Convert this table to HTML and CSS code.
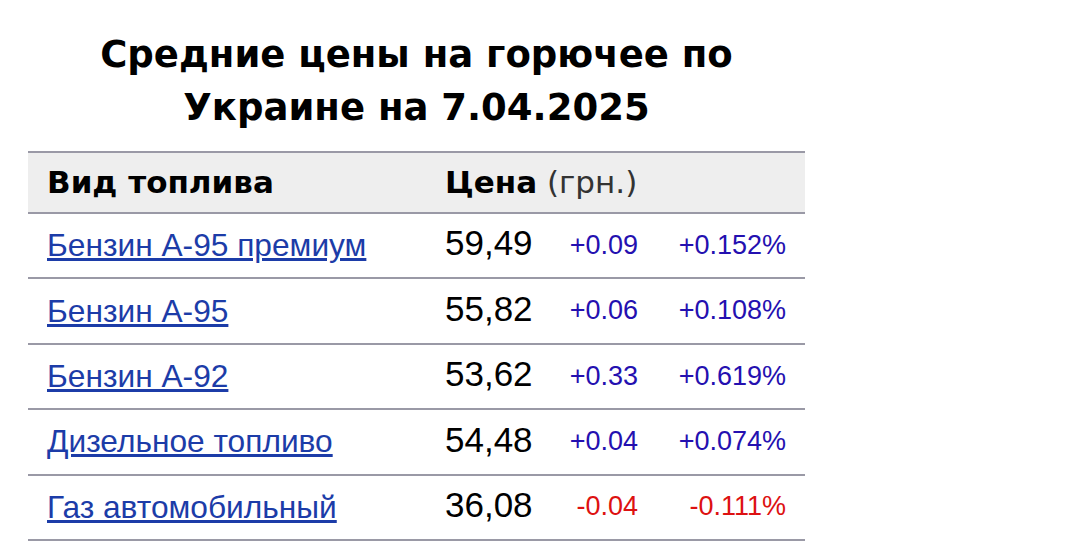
FILE: index.html
```html
<!DOCTYPE html>
<html lang="ru">
<head>
<meta charset="utf-8">
<title>Средние цены на горючее</title>
<link rel="stylesheet" href="styles.css">
</head>
<body>
<div class="wrap">
  <h1 class="title">Средние цены на горючее по<br>Украине на 7.04.2025</h1>
  <div class="table">
    <div class="row head">
      <div class="c-name">Вид топлива</div>
      <div class="c-price-head"><b>Цена</b> <span>(грн.)</span></div>
    </div>
    <div class="row">
      <div class="c-name"><a href="#">Бензин А-95 премиум</a></div>
      <div class="c-price">59,49</div>
      <div class="c-chg up">+0.09</div>
      <div class="c-pct up">+0.152%</div>
    </div>
    <div class="row">
      <div class="c-name"><a href="#">Бензин А-95</a></div>
      <div class="c-price">55,82</div>
      <div class="c-chg up">+0.06</div>
      <div class="c-pct up">+0.108%</div>
    </div>
    <div class="row">
      <div class="c-name"><a href="#">Бензин А-92</a></div>
      <div class="c-price">53,62</div>
      <div class="c-chg up">+0.33</div>
      <div class="c-pct up">+0.619%</div>
    </div>
    <div class="row">
      <div class="c-name"><a href="#">Дизельное топливо</a></div>
      <div class="c-price">54,48</div>
      <div class="c-chg up">+0.04</div>
      <div class="c-pct up">+0.074%</div>
    </div>
    <div class="row">
      <div class="c-name"><a href="#">Газ автомобильный</a></div>
      <div class="c-price">36,08</div>
      <div class="c-chg down">-0.04</div>
      <div class="c-pct down">-0.111%</div>
    </div>
  </div>
</div>
</body>
</html>
```

FILE: styles.css
```css
html, body {
  margin: 0;
  padding: 0;
  background: #fff;
}
body {
  font-family: "Liberation Sans", Arial, sans-serif;
  color: #000;
}
.wrap {
  width: 777px;
  margin-left: 28px;
  padding-top: 28px;
}
.title {
  margin: 0 0 17px 0;
  font-family: "DejaVu Sans", Verdana, sans-serif;
  font-weight: bold;
  font-size: 37px;
  line-height: 53px;
  text-align: center;
  color: #000;
}
.table {
  border-top: 2px solid #9a99a6;
}
.row {
  display: grid;
  grid-template-columns: 417px 100px 93px 148px 19px;
  align-items: center;
  height: 63.4px;
  border-bottom: 2px solid #9a99a6;
}
.row.head {
  background: #eeeeee;
  height: 59px;
}
.c-name {
  padding-left: 19px;
  font-size: 31.7px;
  line-height: 1.1;
}
.head .c-name {
  font-family: "DejaVu Sans", Verdana, sans-serif;
  font-weight: bold;
  font-size: 31px;
}
.c-price-head {
  grid-column: 2 / 6;
  font-family: "DejaVu Sans", Verdana, sans-serif;
  font-size: 31px;
  line-height: 1.1;
  white-space: nowrap;
}
.c-price-head b {
  font-weight: bold;
  color: #000;
}
.c-price-head span {
  color: #333;
}
.c-name a {
  color: #1c3ca8;
  text-decoration: underline;
}
.c-price {
  font-size: 35px;
  line-height: 1.1;
  position: relative;
  top: -2px;
}
.c-chg, .c-pct {
  text-align: right;
  font-size: 27px;
  line-height: 1.1;
}
.up { color: #2410b0; }
.down { color: #dd1111; }
```
